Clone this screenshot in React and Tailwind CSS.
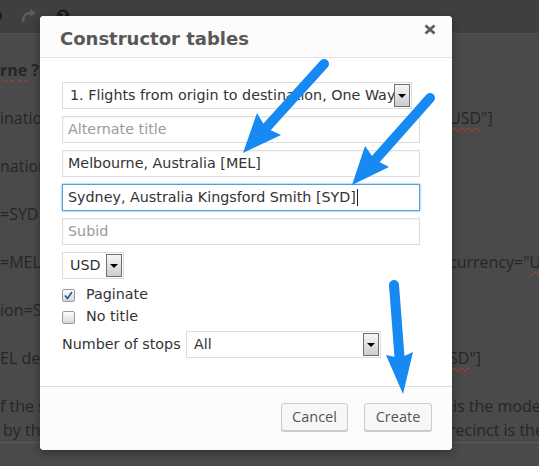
import React from "react";

function DropBtn() {
  return (
    <div className="my-[1px] mr-[1px] w-[16px] shrink-0 border border-[#6f6f6f] bg-linear-to-b from-[#f6f6f6] to-[#cdcdcd] flex items-center justify-center">
      <div className="w-0 h-0 border-l-[4px] border-r-[4px] border-t-[4px] border-l-transparent border-r-transparent border-t-black" />
    </div>
  );
}

function Select({ w, text }) {
  return (
    <div className={`${w} h-[27px] flex items-stretch border border-[#dcdcdc] bg-white`}>
      <div className="flex-1 flex items-center pl-[7px] whitespace-nowrap overflow-hidden text-[#333]">{text}</div>
      <DropBtn />
    </div>
  );
}

function Field({ children, focused, placeholder }) {
  return (
    <div
      className={`w-[358px] h-[27px] flex items-center pl-[5px] whitespace-pre border ${
        focused
          ? "border-[#5b9dd9] shadow-[0_0_2px_rgba(30,140,190,0.8)]"
          : "border-[#dddddd] shadow-[inset_0_1px_2px_rgba(0,0,0,0.05)]"
      } ${placeholder ? "text-[#9a9a9a]" : "text-[#333]"}`}
    >
      {children}
    </div>
  );
}

function Check({ checked, label }) {
  return (
    <div className="h-[22px] flex items-center gap-[11px]">
      <div className="w-[13px] h-[13px] border border-[#9a9a9a] rounded-[2px] bg-linear-to-b from-[#fdfdfd] to-[#d8d8d8] flex items-center justify-center">
        {checked && (
          <svg width="9" height="9" viewBox="0 0 9 9">
            <path d="M1 4.5 L3.5 7.5 L8 1" fill="none" stroke="#2a4ea0" strokeWidth="1.6" />
          </svg>
        )}
      </div>
      <span className="text-[#333]">{label}</span>
    </div>
  );
}

function Row({ left, right, leftCls = "", rightCls = "", tight }) {
  return (
    <div className={`flex h-[24px] whitespace-nowrap ${tight ? "" : "mb-[24px]"}`}>
      <div className={`w-[449px] shrink-0 overflow-hidden ${leftCls}`}>{left}</div>
      <div className={rightCls}>{right}</div>
    </div>
  );
}

const wavy = "underline decoration-wavy decoration-[#c0392b] decoration-1 underline-offset-[3px]";

export default function App() {
  return (
    <div className="relative w-[539px] h-[466px] overflow-hidden bg-[#4a4a4a] font-['Open_Sans',sans-serif]">
      {/* toolbar */}
      <div className="h-[34px] bg-[#3f3f3f] border-b border-[#505050] flex items-center gap-[18px]">
        <svg width="14" height="14" viewBox="0 0 14 14" className="-ml-[11px] mt-[-2px]">
          <circle cx="7" cy="7" r="6" fill="#1f1f1f" />
        </svg>
        <svg width="16" height="14" viewBox="0 0 16 14" className="mt-[-2px]">
          <path d="M2 13 C2 6 5 4 10 4" fill="none" stroke="#5c5c5c" strokeWidth="2.4" />
          <path d="M9 0 L15 4 L9 8 Z" fill="#5c5c5c" />
        </svg>
        <svg width="14" height="14" viewBox="0 0 14 14" className="ml-[1px] mt-[-2px]">
          <circle cx="7" cy="7" r="6.5" fill="#1c1c1c" />
          <text x="7" y="11" textAnchor="middle" fontSize="10" fontWeight="bold" fill="#4a4a4a" fontFamily="DejaVu Sans">?</text>
        </svg>
      </div>

      {/* background page text */}
      <div className="pt-[24px] text-[16px] leading-[24px] text-[#262626]">
        <Row left={<span className="font-bold"><span className={wavy}>rne</span> ?</span>} />
        <Row left="inatio" right={<span><span className={wavy}>USD</span>"]</span>} />
        <Row left="nation" />
        <Row left="=SYD" />
        <Row left="=MEL" right={<span>currency="<span className={wavy}>US</span></span>} />
        <Row left="ion=S" />
        <Row left="EL de" right={<span><span className={wavy}>SD</span>"]</span>} />
        <Row left="f the s" right="is the mode" rightCls="pl-[4px]" tight />
        <Row left="by the" leftCls="pl-[3px]" right="recinct is the" tight />
        <div className="border-t border-[#5a5a5a]" />
      </div>

      {/* dialog */}
      <div className="absolute left-[40px] top-[16px] w-[412px] h-[434px] flex flex-col bg-white rounded-[4px] shadow-[0_3px_8px_rgba(0,0,0,0.35)] overflow-hidden font-['DejaVu_Sans',sans-serif] text-[14.3px]">
        <div className="h-[42px] shrink-0 border-b border-[#e2e2e2] bg-[#fcfcfc] flex justify-between pl-[20px] pr-[16px]">
          <div className="pt-[12px] text-[18px] leading-[22px] font-bold text-[#585858]">Constructor tables</div>
          <svg width="12" height="11" viewBox="0 0 12 11" className="mt-[8px]">
            <path d="M1.5 1.5 L10.5 9.5 M10.5 1.5 L1.5 9.5" stroke="#5e5e5e" strokeWidth="2.8" />
          </svg>
        </div>
        <div className="h-[328px] shrink-0 pt-[24px] px-[22px] flex flex-col">
          <div className="flex flex-col gap-[7px]">
            <Select w="w-[350px]" text="1. Flights from origin to destination, One Way" />
            <Field placeholder>Alternate title</Field>
            <Field>Melbourne, Australia [MEL]</Field>
            <Field focused>
              Sydney, Australia Kingsford Smith [SYD]
              <span className="inline-block w-[1px] h-[17px] bg-[#222] ml-[1px]" />
            </Field>
            <Field placeholder>Subid</Field>
            <Select w="w-[62px]" text="USD" />
          </div>
          <div className="mt-[5px]">
            <Check checked label="Paginate" />
            <Check label="No title" />
          </div>
          <div className="mt-[3px] flex items-center">
            <span className="w-[124px] text-[#333]">Number of stops</span>
            <Select w="w-[195px]" text="All" />
          </div>
        </div>
        <div className="flex-1 border-t border-[#dedede] bg-[#fcfcfc] flex justify-end items-start pt-[16px] pr-[20px] gap-[16px] font-['Open_Sans',sans-serif] text-[14.5px] text-[#555]">
          <button className="h-[28px] w-[67px] border border-[#cccccc] rounded-[3px] bg-[#f7f7f7] shadow-[0_1px_0_#cccccc]">Cancel</button>
          <button className="h-[28px] w-[68px] border border-[#cccccc] rounded-[3px] bg-[#f7f7f7] shadow-[0_1px_0_#cccccc]">Create</button>
        </div>
      </div>

      {/* annotation arrows */}
      <svg className="absolute left-0 top-0 pointer-events-none" width="539" height="466" viewBox="0 0 539 466">
        <g stroke="#1689f2" strokeWidth="10" strokeLinecap="round" fill="none">
          <line x1="324" y1="64" x2="266" y2="128" />
          <line x1="430" y1="98" x2="375" y2="160" />
          <line x1="394" y1="285" x2="399.5" y2="357" />
        </g>
        <g fill="#1689f2">
          <polygon points="243,153 281,135 266,128 257,113" />
          <polygon points="352,185 389,167 374.6,159.6 365,146" />
          <polygon points="403,394 413,352 399.8,358 386,355" />
        </g>
      </svg>
    </div>
  );
}
